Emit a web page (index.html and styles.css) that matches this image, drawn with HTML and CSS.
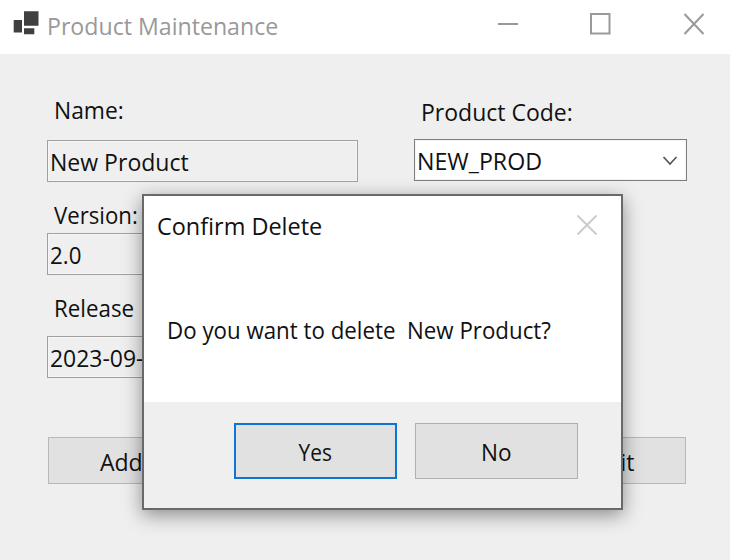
FILE: index.html
```
<!DOCTYPE html>
<html lang="en">
<head>
<meta charset="utf-8">
<title>Product Maintenance</title>
<link rel="stylesheet" href="styles.css">
</head>
<body>
<div class="window">
  <header class="titlebar">
    <svg class="app-icon" width="26" height="26" viewBox="0 0 26 26"><path d="M.7 8h8.300v12.500H.7zM11 -.7h14.500v14.500H11zM11 16.300h10.300v6H11z"/></svg>
    <h1 class="title"><span class="t-title">Product Maintenance</span></h1>
    <div class="controls">
      <svg width="22" height="24" viewBox="0 0 22 24"><path d="M1 12h20"/></svg>
      <svg width="22" height="24" viewBox="0 0 22 24"><rect x="1" y="2" width="18.500" height="19.500"/></svg>
      <svg width="22" height="24" viewBox="0 0 22 24"><path d="M1.500 2l19 20M20.500 2l-19 20"/></svg>
    </div>
  </header>
  <main class="form">
    <div class="columns">
      <section class="left">
        <label class="label"><span class="t-name">Name:</span></label>
        <div class="field field-name"><span class="t-product">New Product</span></div>
        <label class="label label-version"><span class="t-version">Version:</span></label>
        <div class="field field-version"><span class="t-num">2.0</span></div>
        <label class="label label-release"><span class="t-release">Release</span></label>
        <div class="field field-release"><span class="t-date">2023-09-</span></div>
      </section>
      <section class="right">
        <label class="label label-code"><span class="t-code">Product Code:</span></label>
        <div class="field select"><span class="t-select">NEW_PROD</span>
          <svg width="16" height="10" viewBox="0 0 16 10"><path d="M1.500 1l6.500 7 6.500-7"/></svg>
        </div>
      </section>
    </div>
    <div class="actions">
      <button class="button"><span class="t-add">Add</span></button>
      <button class="button button-exit"><span class="t-exit">Exit</span></button>
    </div>
  </main>
  <div class="dialog">
    <div class="dialog-body">
      <div class="dialog-head">
        <h2 class="dialog-title"><span class="t-confirm">Confirm Delete</span></h2>
        <svg class="dialog-close" width="22" height="22" viewBox="0 0 22 22"><path d="M1.500 1.500l19 19M20.500 1.500l-19 19"/></svg>
      </div>
      <p class="message"><span class="t-message">Do you want to delete&nbsp; New Product?</span></p>
    </div>
    <div class="dialog-foot">
      <button class="choice choice-default"><span class="t-yes">Yes</span></button>
      <button class="choice"><span class="t-no">No</span></button>
    </div>
  </div>
</div>
</body>
</html>
```
FILE: styles.css
```
* { box-sizing: border-box; }
body { margin: 0; font: 24px/32px "Open Sans", "Noto Sans", sans-serif; color: #111; }
h1, h2, p { margin: 0; font: inherit; }
button { font: inherit; color: inherit; padding: 0; border-radius: 0; }
svg { display: block; flex: none; overflow: visible; fill: none; }
span { display: inline-block; white-space: nowrap; transform-origin: 0 50%; }

/* slightly condensed lettering */
.t-title { transform: scaleX(.964); }
.t-name { transform: scaleX(.95); }
.t-product { transform: scaleX(.96); }
.t-version { transform: scaleX(.925); }
.t-num { transform: scaleX(.93); }
.t-release { transform: scaleX(.93); }
.t-date { transform: scaleX(.955); }
.t-code { transform: scaleX(.958); }
.t-select { transform: scaleX(.966); }
.t-confirm { transform: scaleX(.977); }
.t-message { transform: scaleX(.929); }
.t-yes { transform: scaleX(.87); transform-origin: 50% 50%; }
.t-no { transform: scaleX(.94); transform-origin: 50% 50%; }
.t-add { transform: scaleX(.96); transform-origin: 50% 50%; }
.t-exit { transform: scaleX(.95); }

.window { position: relative; width: 730px; height: 560px; overflow: hidden; background: #efefef; }

.titlebar { display: flex; height: 54px; background: #fff; padding: 0 25px 0 13px; }
.app-icon { margin-top: 12px; fill: #404040; }
.title { margin: 10px 0 0 8px; width: 250px; color: #999; }
.controls { display: flex; gap: 71px; margin: 12px 0 0 auto; stroke: #999; stroke-width: 2; }

.form { padding: 0 43px 0 47px; }
.columns { display: flex; justify-content: space-between; height: 383px; }
.left { width: 311px; padding-top: 40px; }
.right { width: 273px; padding-top: 42px; }
.label { display: block; height: 32px; padding-left: 6.6px; }
.label-version { margin-top: 17px; }
.label-release { margin-top: 17px; }
.field { display: flex; height: 42px; border: 1px solid #a0a0a0; padding: 5px 0 0 2.4px; box-shadow: inset 0 0 0 1px #f6f6f6; }
.field-name { margin-top: 14px; }
.field-version { margin-top: 2px; }
.field-release { margin-top: 12px; }
.select { margin-top: 11px; background: #fff; border-color: #7d7d7d; justify-content: space-between; padding-right: 8px; }
.select svg { margin-top: 11px; stroke: #555; stroke-width: 1.700; }
.actions { display: flex; justify-content: space-between; padding: 0 1px; }
.button { display: flex; justify-content: center; width: 146px; height: 47px; padding-top: 8px; background: #e1e1e1; border: 1px solid #b8b8b8; }
.button-exit { width: 140px; }

.dialog { position: absolute; left: 142px; top: 194px; width: 481px; height: 316px; border: 2px solid #696969; background: #efefef; box-shadow: 0 5px 18px rgba(0,0,0,.42); }
.dialog-body { height: 206px; background: #fff; padding: 14px 23px 0 13px; }
.dialog-head { display: flex; justify-content: space-between; }
.dialog-close { margin-top: 4px; stroke: #ccc; stroke-width: 2; }
.message { margin: 72px 0 0 10px; }
.dialog-foot { display: flex; justify-content: flex-end; gap: 18px; padding: 21px 43px 0 0; }
.choice { display: flex; justify-content: center; width: 163px; height: 56px; padding-top: 12px; background: #e1e1e1; border: 1px solid #b0b0b0; }
.choice-default { border: 2px solid #0f75d2; padding-top: 11px; }
```
